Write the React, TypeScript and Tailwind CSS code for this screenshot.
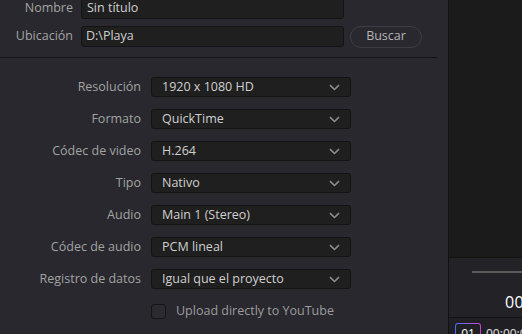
import { ReactNode } from "react";

const rows = [
    { label: "Resolución", value: "1920 x 1080 HD" },
    { label: "Formato", value: "QuickTime" },
    { label: "Códec de video", value: "H.264" },
    { label: "Tipo", value: "Nativo" },
    { label: "Audio", value: "Main 1 (Stereo)" },
    { label: "Códec de audio", value: "PCM lineal" },
    { label: "Registro de datos", value: "Igual que el proyecto" },
];

function Chevron() {
    return (
        <svg width="11" height="7" viewBox="0 0 11 7" className="shrink-0">
            <path d="M1 1.2 L5.5 5.5 L10 1.2" fill="none" stroke="#8c8c8c" strokeWidth="1.6" />
        </svg>
    );
}

function FieldRow({ label, children }: { label: string; children: ReactNode }) {
    return (
        <div className="flex items-center h-[21px]">
            <span className="w-[73px] shrink-0 text-right text-[#a3a3a3]">{label}</span>
            <div className="ml-[8px] flex items-center">{children}</div>
        </div>
    );
}

export default function App() {
    return (
        <div
            className="w-[522px] h-[334px] flex overflow-hidden text-[12.5px] leading-none"
            style={{ fontFamily: '"Open Sans", "Noto Sans", sans-serif' }}
        >
            {/* Render settings panel */}
            <div className="w-[449px] shrink-0 bg-[#28282e] border-r border-[#121214] flex flex-col">
                <div className="mt-[-2px] flex flex-col gap-[7px]">
                    <FieldRow label="Nombre">
                        <div className="w-[263px] h-[21px] bg-[#1f1f1f] border border-[#141414] rounded-[3px] flex items-center px-[5px] text-[#cfcfcf]">
                            Sin título
                        </div>
                    </FieldRow>
                    <FieldRow label="Ubicación">
                        <div className="w-[263px] h-[21px] bg-[#1f1f1f] border border-[#141414] rounded-[3px] flex items-center px-[4px] text-[#cfcfcf]">
                            D:\Playa
                        </div>
                        <button className="ml-[6px] w-[72px] h-[22px] rounded-full border border-[#3d3d44] text-[#b4b4b4] flex items-center justify-center">
                            Buscar
                        </button>
                    </FieldRow>
                </div>

                <div className="mt-[10px] mr-[11px] h-px shrink-0 bg-[#141416]" />

                <div className="mt-[19px] flex flex-col gap-[12px]">
                    {rows.map((row) => (
                        <div key={row.label} className="flex items-center h-[20px]">
                            <span className="w-[141px] shrink-0 text-right text-[#a3a3a3]">{row.label}</span>
                            <div className="ml-[10px] w-[200px] h-[20px] bg-[#1f1f1f] border border-[#131313] rounded-[3px] flex items-center justify-between pl-[10px] pr-[10px] text-[#cfcfcf]">
                                <span>{row.value}</span>
                                <Chevron />
                            </div>
                        </div>
                    ))}
                    <div className="flex items-center h-[20px] pl-[151px]">
                        <div className="w-[15px] h-[15px] rounded-[3px] border border-[#151515] bg-[#2a2a2f]" />
                        <span className="ml-[10px] text-[#9c9c9c]">Upload directly to YouTube</span>
                    </div>
                </div>
            </div>

            {/* Viewer / timecode side */}
            <div className="flex-1 flex flex-col bg-[#1b1b1b]">
                <div className="h-[258px] shrink-0 border-b border-[#121212]" />
                <div className="h-[60px] shrink-0 bg-[#232327] border-b border-[#141414] flex flex-col">
                    <div className="mt-[13px] ml-[23px] h-[2px] bg-[#5a5a5a]" />
                    <div className="mt-[21px] ml-[56px] text-white text-[16px] tracking-wide whitespace-nowrap">00:00</div>
                </div>
                <div className="flex-1 min-h-0 overflow-hidden bg-[#202024] flex items-start pt-[5px] pl-[6px] gap-[5px]">
                    <div className="shrink-0 rounded-[3px] p-px bg-gradient-to-r from-[#3b6bff] to-[#c63fd0]">
                        <div className="w-[24px] h-[16px] rounded-[2px] bg-[#202024] text-white text-[12px] flex items-start justify-center pt-[4px]">
                            01
                        </div>
                    </div>
                    <span className="pt-[5px] text-[#e0e0e0] text-[12px] whitespace-nowrap">00:00:00</span>
                </div>
            </div>
        </div>
    );
}
